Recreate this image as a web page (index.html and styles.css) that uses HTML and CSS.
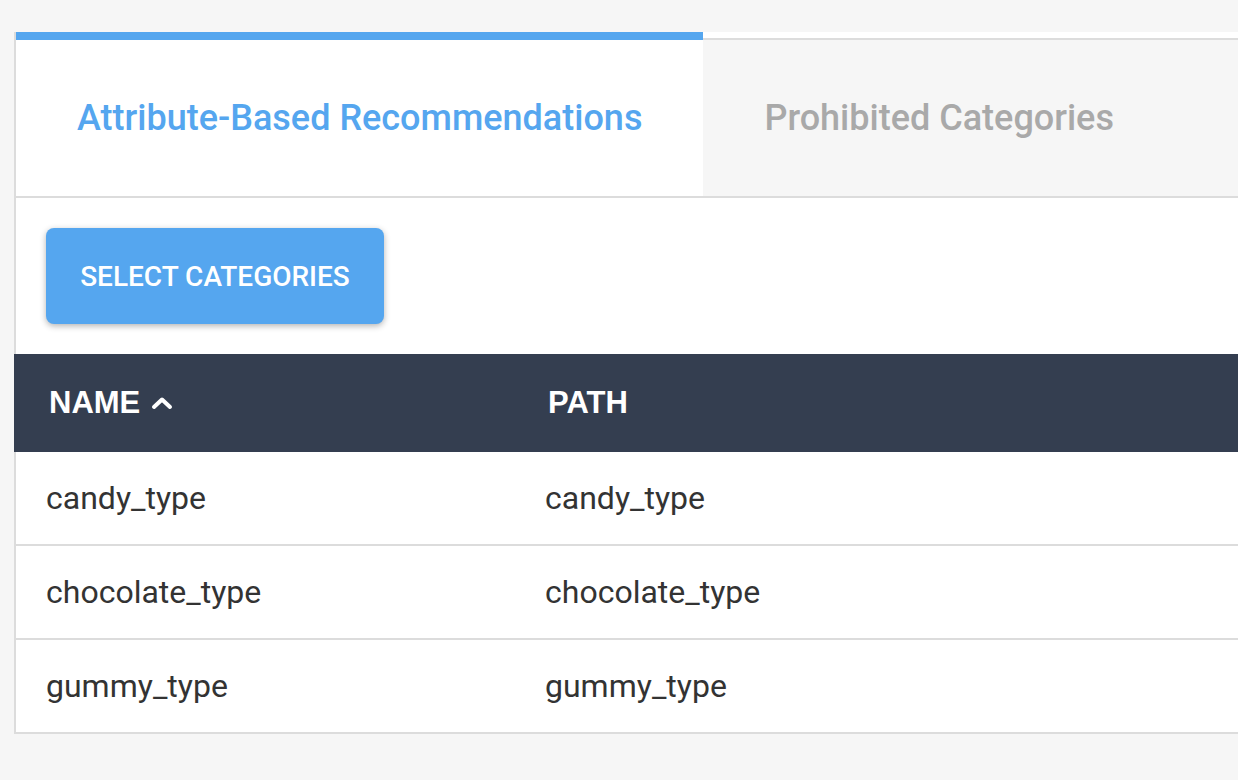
FILE: index.html
```html
<!DOCTYPE html>
<html>
<head>
<meta charset="utf-8">
<link rel="stylesheet" href="styles.css">
</head>
<body>
<div class="card">
  <div class="tabs">
    <div class="tab active">Attribute-Based Recommendations</div>
    <div class="tab">Prohibited Categories</div>
    <div class="tab-fill"></div>
  </div>
  <div class="panel">
    <div class="toolbar">
      <button class="btn">SELECT CATEGORIES</button>
    </div>
    <table class="grid">
      <thead>
        <tr>
          <th class="col-name">NAME <svg class="sort" width="22" height="14" viewBox="0 0 22 14"><path d="M3 11 L11 3.5 L19 11" fill="none" stroke="#fff" stroke-width="4" stroke-linecap="round" stroke-linejoin="round"/></svg></th>
          <th>PATH</th>
        </tr>
      </thead>
      <tbody>
        <tr><td>candy_type</td><td>candy_type</td></tr>
        <tr><td>chocolate_type</td><td>chocolate_type</td></tr>
        <tr><td>gummy_type</td><td>gummy_type</td></tr>
      </tbody>
    </table>
  </div>
</div>
</body>
</html>
```

FILE: styles.css
```css
html, body {
  margin: 0;
  padding: 0;
  background: #f6f6f6;
}
body {
  padding: 32px 0 0 14px;
  font-family: Roboto, "Liberation Sans", sans-serif;
  overflow: hidden;
}
.card {
  border-left: 2px solid #dcdcdc;
  border-bottom: 2px solid #dcdcdc;
  background: #fff;
  margin-top: 6px;
}
.tabs {
  display: flex;
  margin-top: -6px;
  border-bottom: 2px solid #dcdcdc;
}
.tab {
  padding: 0 61px;
  height: 156px;
  display: flex;
  align-items: center;
  font-size: 36px;
  font-weight: 500;
  color: #a9a9a9;
  background: #f6f6f6;
  border-top: 2px solid #dcdcdc;
  margin-top: 6px;
  white-space: nowrap;
}
.tab.active {
  color: #55a6ef;
  background: #fff;
  border-top: 8px solid #55a6ef;
  margin-top: 0;
}
.tab-fill {
  flex: 1;
  background: #f6f6f6;
  border-top: 2px solid #dcdcdc;
  margin-top: 6px;
}
.panel {
  padding-top: 30px;
}
.toolbar {
  padding: 0 0 30px 30px;
}
.btn {
  width: 338px;
  height: 96px;
  border: none;
  border-radius: 8px;
  background: #55a6ef;
  color: #fff;
  font-family: Roboto, sans-serif;
  font-size: 28px;
  font-weight: 500;
  box-shadow: 0 2px 6px rgba(0, 0, 0, 0.3);
}
.grid {
  width: calc(100% + 2px);
  margin-left: -2px;
  border-collapse: collapse;
}
.grid th {
  background: #343e50;
  color: #fff;
  font-family: "Liberation Sans", Arial, sans-serif;
  font-weight: 700;
  font-size: 31px;
  text-align: left;
  height: 98px;
  padding: 0 0 0 35px;
}
.grid th.col-name {
  width: 464px;
}
.sort {
  vertical-align: 3px;
  margin-left: 2px;
}
.grid td {
  font-family: Roboto, sans-serif;
  font-size: 32px;
  color: #333;
  height: 92px;
  padding: 0 0 0 32px;
  border-bottom: 2px solid #dcdcdc;
}
.grid tr:last-child td {
  border-bottom: none;
}
```
